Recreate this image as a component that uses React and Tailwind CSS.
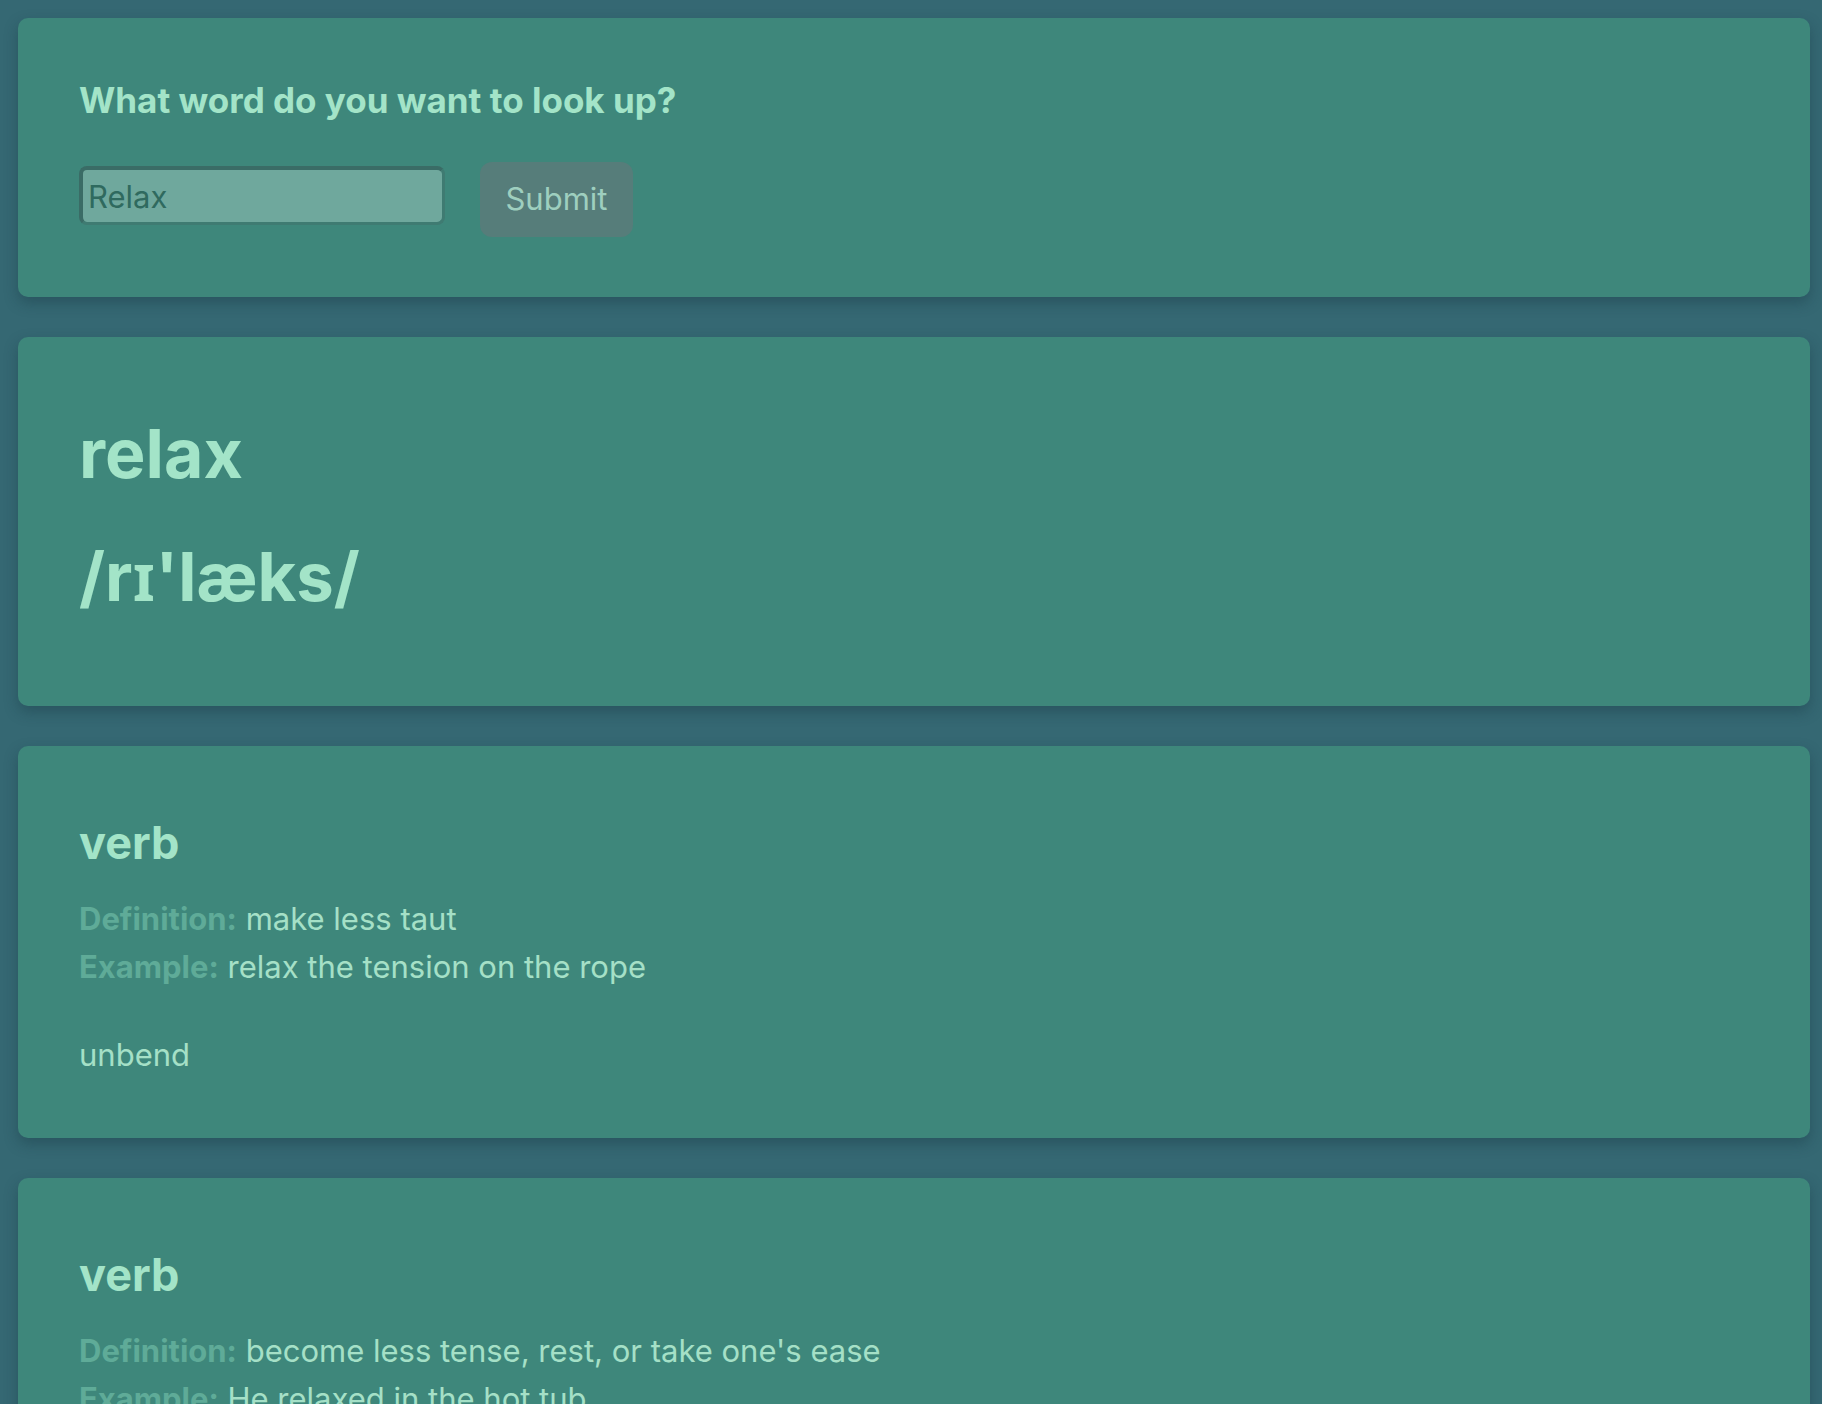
import React from "react";

const font = { fontFamily: "Inter, 'Noto Sans', 'Liberation Sans', sans-serif" };

function Card({ children, className = "" }) {
  return (
    <section
      className={`ml-[18px] mr-[12px] rounded-[10px] bg-[#3e877b] shadow-[0_6px_14px_rgba(20,50,60,0.35)] ${className}`}
    >
      {children}
    </section>
  );
}

function Meaning({ pos, definition, example, synonyms }) {
  return (
    <Card className="pt-[70px] pb-[59px] px-[61px]">
      <h2 className="text-[45px] font-bold leading-[54px] text-[#a3e4c8]">{pos}</h2>
      <div className="mt-[25px] text-[31px] leading-[48px] text-[#a5e0c7]">
        <p>
          <span className="font-bold text-[#5fab98]">Definition:</span> {definition}
        </p>
        {example && (
          <p>
            <span className="font-bold text-[#5fab98]">Example:</span> {example}
          </p>
        )}
      </div>
      {synonyms && (
        <p className="mt-[40px] text-[31px] leading-[48px] text-[#a5e0c7]">{synonyms}</p>
      )}
    </Card>
  );
}

export default function App() {
  return (
    <div style={font} className="min-h-screen bg-[#356873] pt-[18px] pb-[40px] flex flex-col gap-[40px]">
      <Card className="pt-[60px] pb-[60px] px-[61px]">
        <h3 className="text-[35px] font-bold leading-[44px] text-[#a3e4c8]">
          What word do you want to look up?
        </h3>
        <form className="mt-[40px] flex items-start gap-[35px]" onSubmit={(e) => e.preventDefault()}>
          <input
            defaultValue="Relax"
            className="mt-[4px] h-[59px] w-[366px] rounded-[8px] border-solid border-t-[4px] border-l-[4px] border-b-[3px] border-r-[3px] border-t-[#3a6c66] border-l-[#3a6c66] border-b-[#3f7b72] border-r-[#3f7b72] bg-[#6fa89d] px-[5px] text-[31px] text-[#2f6a5f] outline-none"
          />
          <button
            type="submit"
            className="h-[75px] w-[153px] rounded-[12px] bg-[#567d7a] text-[31px] text-[#9ecfbf]"
          >
            Submit
          </button>
        </form>
      </Card>

      <Card className="pt-[76px] pb-[89px] px-[61px]">
        <h1 className="text-[68px] font-bold leading-[80px] text-[#a3e4c8]">relax</h1>
        <h1 className="mt-[44px] text-[67px] font-bold leading-[80px] text-[#a3e4c8]">/rɪ'læks/</h1>
      </Card>

      <Meaning pos="verb" definition="make less taut" example="relax the tension on the rope" synonyms="unbend" />
      <Meaning
        pos="verb"
        definition="become less tense, rest, or take one's ease"
        example="He relaxed in the hot tub"
        synonyms="loosen up, unbend, unwind, decompress, slow down"
      />
      <Meaning pos="verb" definition="become less tense, less formal, or less restrained, and more friendly" synonyms="loosen up, unbend, unwind" />
    </div>
  );
}
